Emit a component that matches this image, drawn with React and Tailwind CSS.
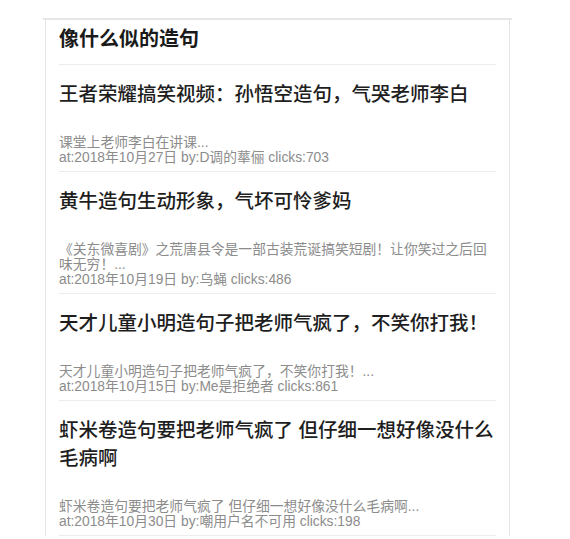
// 造句列表
const posts = [
  {
    title: '王者荣耀搞笑视频：孙悟空造句，气哭老师李白',
    desc: '课堂上老师李白在讲课...',
    date: '2018年10月27日',
    author: 'D调的蕐俪',
    clicks: 703,
  },
  {
    title: '黄牛造句生动形象，气坏可怜爹妈',
    desc: '《关东微喜剧》之荒唐县令是一部古装荒诞搞笑短剧！让你笑过之后回味无穷！...',
    date: '2018年10月19日',
    author: '乌蝇',
    clicks: 486,
  },
  {
    title: '天才儿童小明造句子把老师气疯了，不笑你打我！',
    desc: '天才儿童小明造句子把老师气疯了，不笑你打我！...',
    date: '2018年10月15日',
    author: 'Me是拒绝者',
    clicks: 861,
  },
  {
    title: '虾米卷造句要把老师气疯了 但仔细一想好像没什么毛病啊',
    desc: '虾米卷造句要把老师气疯了 但仔细一想好像没什么毛病啊...',
    date: '2018年10月30日',
    author: '嘲用户名不可用',
    clicks: 198,
  },
];

export default function App() {
  return (
    <div
      className="min-h-[539px] bg-white pt-[18px]"
      style={{ fontFamily: '"Liberation Sans", "Noto Sans CJK SC", sans-serif' }}
    >
      <div className="ml-[43px] w-[469px] border-t-2 border-[#e6e6e6]">
        <div className="mx-[2px] border-x border-[#e4e4e4] px-[13px]">
          {/* 标题 */}
          <h2 className="border-b border-[#ececec] pt-[5px] pb-[11px] text-[20px] leading-[28px] font-bold text-[#1a1a1a]">
            像什么似的造句
          </h2>

          {/* 列表 */}
          {posts.map((p) => (
            <div key={p.title} className="border-b border-[#ececec] pt-[15px] pb-[6px]">
              <h3 className="mb-[27px] text-[19.5px] leading-[28px] font-medium text-[#1e1e1e]">
                {p.title}
              </h3>
              <p className="text-[13.8px] leading-[15px] text-[#8c8c8c]">{p.desc}</p>
              <p className="text-[13.8px] leading-[15px] text-[#8c8c8c]">
                at:{p.date} by:{p.author} clicks:{p.clicks}
              </p>
            </div>
          ))}
        </div>
      </div>
    </div>
  );
}
